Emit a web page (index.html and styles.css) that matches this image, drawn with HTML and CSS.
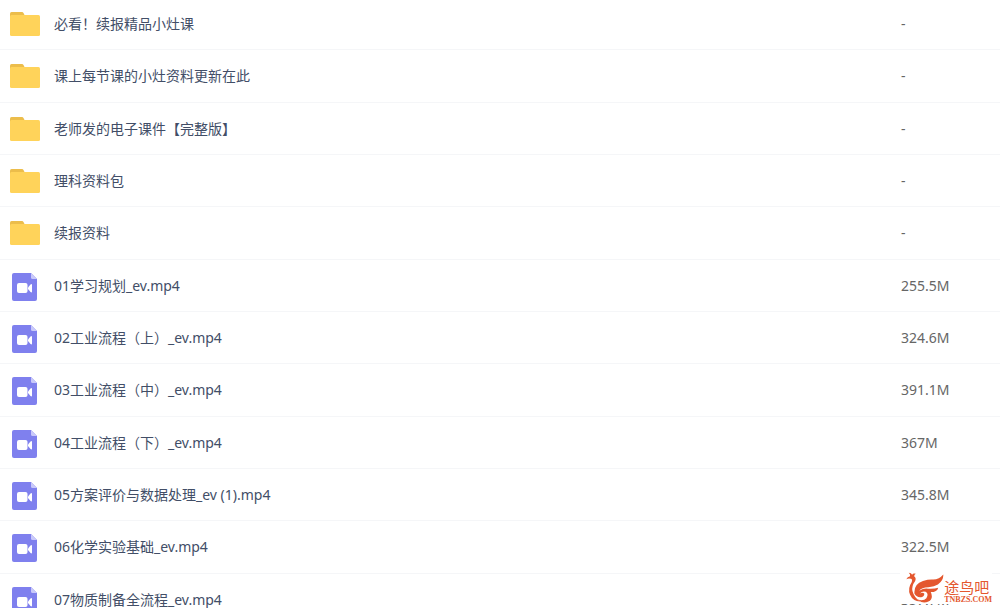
FILE: index.html
```
<!DOCTYPE html>
<html lang="zh-CN">
<head>
<meta charset="utf-8">
<title>文件列表</title>
<link rel="stylesheet" href="styles.css">
</head>
<body>
<svg class="defs" aria-hidden="true">
  <symbol id="folder" viewBox="0 0 30 26">
    <path fill="#ecbd4b" d="M0 8V2.500Q0 1 1.500 1H12Q13 1 13.500 2L15 5V8Z"/>
    <rect y="4" width="30" height="21" rx="1.500" fill="#ffd35a"/>
  </symbol>
  <symbol id="video" viewBox="0 0 25 28">
    <path fill="#7f80ee" d="M2 0H19L25 6V26Q25 28 23 28H2Q0 28 0 26V2Q0 0 2 0Z"/>
    <path fill="#c9c9fa" d="M19 0L25 6H20.500Q19 6 19 4.500Z"/>
    <rect x="5" y="10" width="10.500" height="10" rx="2" fill="#fff"/>
    <path fill="#fff" d="M16 14.500L18.500 11.500Q20 10.500 20 12V18.500Q20 20 18.500 19L16 16Z"/>
  </symbol>
</svg>
<main class="viewport">
  <table class="files">
    <tbody>
      <tr><td class="name"><div class="entry"><svg class="icon folder"><use href="#folder"/></svg><span>必看！续报精品小灶课</span></div></td><td class="size">-</td></tr>
      <tr><td class="name"><div class="entry"><svg class="icon folder"><use href="#folder"/></svg><span>课上每节课的小灶资料更新在此</span></div></td><td class="size">-</td></tr>
      <tr><td class="name"><div class="entry"><svg class="icon folder"><use href="#folder"/></svg><span>老师发的电子课件【完整版】</span></div></td><td class="size">-</td></tr>
      <tr><td class="name"><div class="entry"><svg class="icon folder"><use href="#folder"/></svg><span>理科资料包</span></div></td><td class="size">-</td></tr>
      <tr><td class="name"><div class="entry"><svg class="icon folder"><use href="#folder"/></svg><span>续报资料</span></div></td><td class="size">-</td></tr>
      <tr><td class="name"><div class="entry"><svg class="icon video"><use href="#video"/></svg><span>01学习规划_ev.mp4</span></div></td><td class="size">255.5M</td></tr>
      <tr><td class="name"><div class="entry"><svg class="icon video"><use href="#video"/></svg><span>02工业流程（上）_ev.mp4</span></div></td><td class="size">324.6M</td></tr>
      <tr><td class="name"><div class="entry"><svg class="icon video"><use href="#video"/></svg><span>03工业流程（中）_ev.mp4</span></div></td><td class="size">391.1M</td></tr>
      <tr><td class="name"><div class="entry"><svg class="icon video"><use href="#video"/></svg><span>04工业流程（下）_ev.mp4</span></div></td><td class="size">367M</td></tr>
      <tr><td class="name"><div class="entry"><svg class="icon video"><use href="#video"/></svg><span>05方案评价与数据处理_ev (1).mp4</span></div></td><td class="size">345.8M</td></tr>
      <tr><td class="name"><div class="entry"><svg class="icon video"><use href="#video"/></svg><span>06化学实验基础_ev.mp4</span></div></td><td class="size">322.5M</td></tr>
      <tr><td class="name"><div class="entry"><svg class="icon video"><use href="#video"/></svg><span>07物质制备全流程_ev.mp4</span></div></td><td class="size">357.7M</td></tr>
    </tbody>
  </table>
  <div class="watermark">
    <svg class="bird" viewBox="0 0 112 92" aria-hidden="true">
      <g fill="#e4572e">
        <path d="M1 20Q4 12 12 11Q13 5 8 1Q16 1 18 7Q21 1 29 4Q24 7 24 11Q31 16 27 25Q16 40 19 55Q24 75 42 86Q20 85 12 66Q4 47 17 28Q20 21 15 19Q8 16 1 20Z"/>
        <path d="M25 63Q22 34 50 25Q67 20 80 21Q98 20 110 6Q111 24 94 36Q84 43 66 44Q46 45 39 54Q52 46 65 48Q84 49 95 45Q92 58 73 58Q82 78 66 86Q49 94 34 80Q52 86 60 76Q68 63 58 57Q48 54 41 62Q50 57 54 63Q54 71 45 73Q32 75 25 63Z"/>
      </g>
    </svg>
    <div class="brand"><span class="title">途鸟吧</span><span class="domain">TNBZS.COM</span></div>
  </div>
</main>
</body>
</html>
```
FILE: styles.css
```
body {
  margin: 0;
  background: #fff;
  color: #424e67;
  font: 14px/20px "Noto Sans", "Noto Sans CJK SC", sans-serif;
}

.defs {
  position: absolute;
  width: 0;
  height: 0;
}

.viewport {
  position: relative;
  height: 100vh;
  overflow: hidden;
}

.files {
  width: 100%;
  border-collapse: separate;
  border-spacing: 0;
  table-layout: fixed;
}

.files td {
  box-sizing: border-box;
  height: 52px;
  padding: 0;
  border-bottom: 1px solid #f5f6f8;
  vertical-align: middle;
}

.files tr:nth-child(3n + 2) td {
  height: 53px;
}

.files tr:first-child td {
  height: 50px;
  padding-bottom: 2px;
}

.entry {
  display: flex;
  align-items: center;
  gap: 14px;
  padding-left: 10px;
  white-space: nowrap;
}

.icon {
  flex: none;
}

.folder {
  width: 30px;
  height: 26px;
}

.video {
  width: 25px;
  height: 28px;
  margin: 2px 3px 0 2px;
}

.files .size {
  width: 99px;
  color: #666;
}

.watermark {
  position: absolute;
  right: 8px;
  bottom: 4px;
  display: flex;
  align-items: flex-end;
  padding-left: 6px;
  background: #fff;
  color: #e4572e;
}

.bird {
  width: 38px;
  height: 32px;
}

.brand {
  display: flex;
  flex-direction: column;
  gap: 2px;
}

.title {
  font: 15px/15px "Noto Sans CJK SC", sans-serif;
}

.domain {
  font: bold 8px/8px "Liberation Serif", serif;
}
```
